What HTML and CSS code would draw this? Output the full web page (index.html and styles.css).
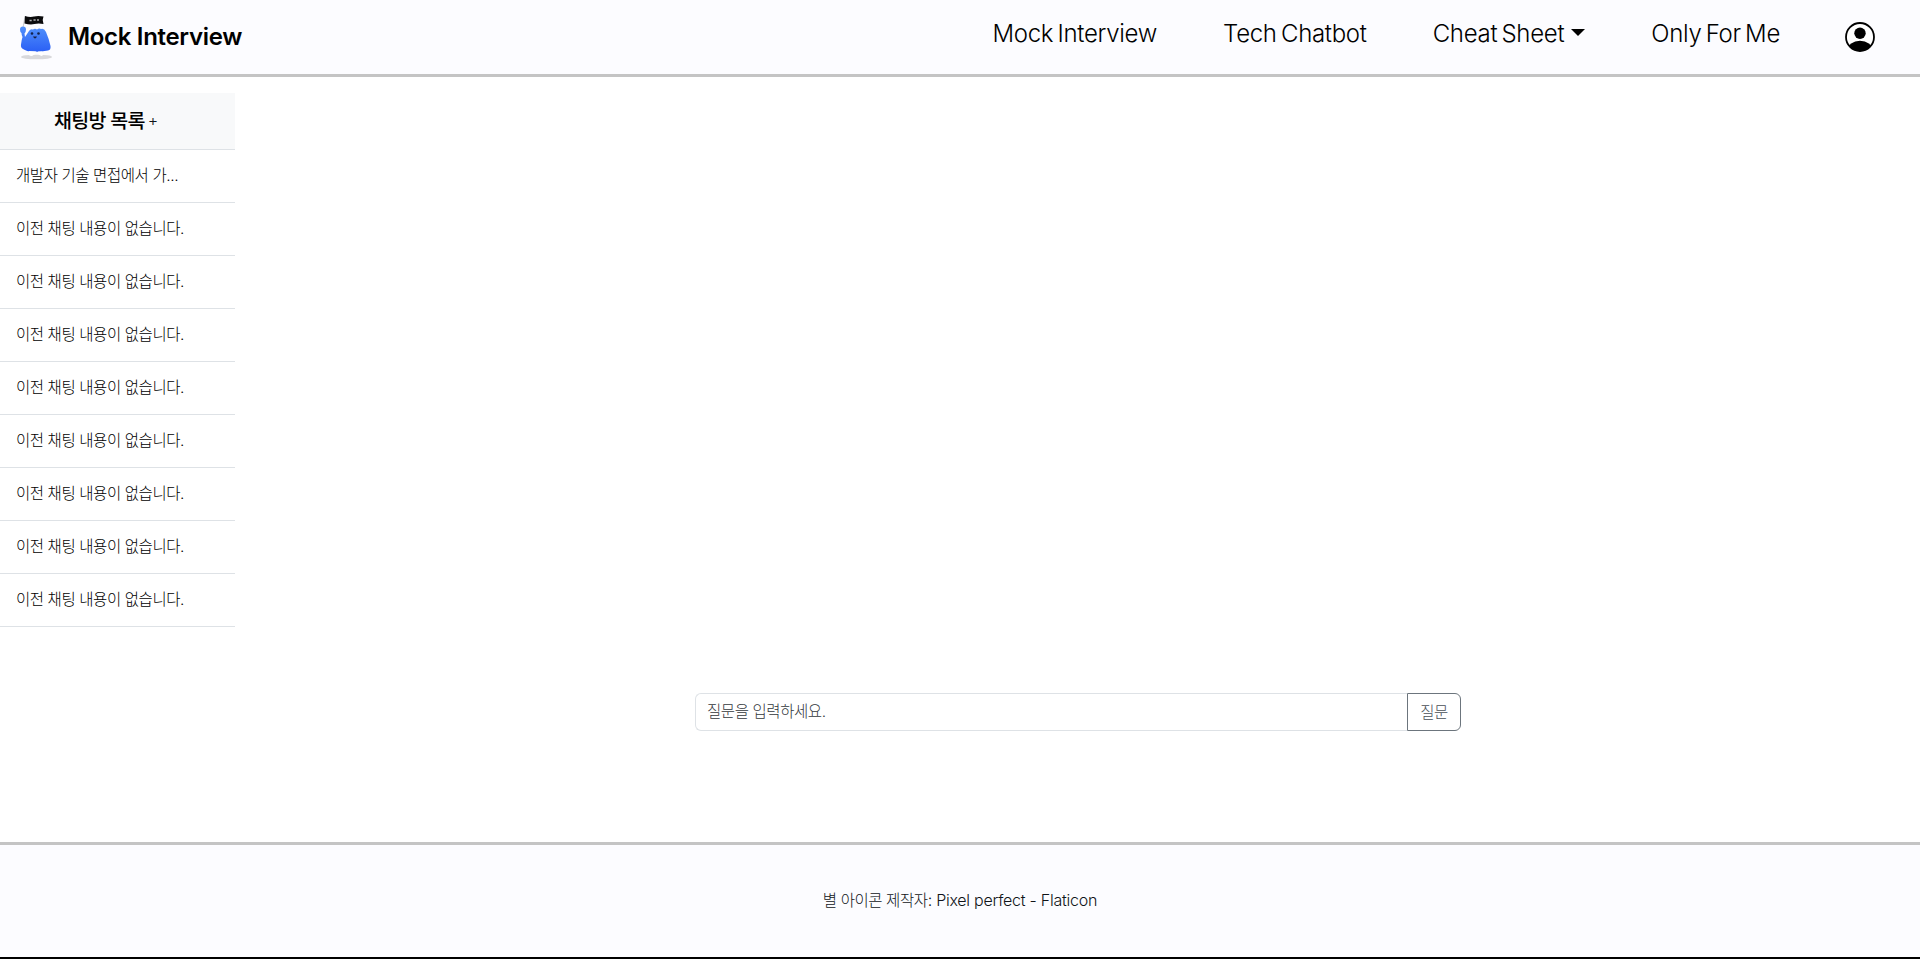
FILE: index.html
```html
<!DOCTYPE html>
<html lang="ko">
<head>
<meta charset="utf-8">
<title>Mock Interview</title>
<link rel="stylesheet" href="styles.css">
</head>
<body>
<header class="navbar">
  <a class="brand">
    <svg class="brand-logo" width="36" height="48" viewBox="0 0 36 48">
      <defs>
        <linearGradient id="body" x1="0" y1="0" x2="0" y2="1"><stop offset="0" stop-color="#5090fb"/><stop offset="1" stop-color="#2b60f5"/></linearGradient>
      </defs>
      <ellipse cx="17.500" cy="44" rx="15.500" ry="2.300" fill="#d9d9dc"/>
      <path d="M4 15L6 3" stroke="#c9cbd0" stroke-width="1"/>
      <path d="M6 3q5 1.500 9 .5t9.500 0l-.8 3.500.8 4q-5-1-9 0t-10-.5z" fill="#0b0b0d"/>
      <path d="M10.500 7.500h2.200M14.500 7h2.200M18 7h2" stroke="#aaa" stroke-width="1.300"/>
      <path d="M1 16.500Q1 13.500 4 13.500T7 16.500Q7 19 5.500 20.500L6 24Q8 21 10 18Q11.500 15.500 14 16.500Q16 15 18 16.500Q20 15 22 16Q25 15 27 19Q30 26 31.500 33Q32 37 29 37.500Q22 39 16 38.500Q8 39 4 36Q1.500 34.500 2 31.500Q2.500 27 3.500 24Q2.500 22 2.500 20Q1 19 1 16.500Z" fill="url(#body)"/>
      <path d="M10 38q-2 5 3 5l3-2 1-2.500zM19 38.500q0 4 4 4.500 2-1 0-4.500z" fill="#fff"/>
      <circle cx="13" cy="20.500" r="1.300" fill="#12214c"/>
      <circle cx="19.500" cy="20.500" r="1.300" fill="#12214c"/>
      <path d="M14 23.500h4q-2 4-4 0z" fill="#172044"/>
    </svg>
    <span class="brand-name">Mock Interview</span>
  </a>
  <nav class="nav">
    <a class="nav-link">Mock Interview</a>
    <a class="nav-link">Tech Chatbot</a>
    <a class="nav-link">Cheat Sheet<span class="caret"></span></a>
    <a class="nav-link">Only For Me</a>
  </nav>
  <svg class="profile" width="30" height="30" viewBox="0 0 30 30">
    <defs><clipPath id="disc"><circle cx="15" cy="15" r="14"/></clipPath></defs>
    <circle cx="15" cy="15" r="14" fill="#fff" stroke="#000" stroke-width="1.800"/>
    <circle cx="15" cy="11.300" r="5.700"/>
    <ellipse cx="15" cy="28" rx="12.500" ry="9.200" clip-path="url(#disc)"/>
  </svg>
</header>
<main class="main">
  <aside class="rooms">
    <div class="rooms-head"><h2 class="rooms-title">채팅방 목록</h2><span class="rooms-add">+</span></div>
    <ul class="room-list">
      <li class="room">개발자 기술 면접에서 가...</li>
      <li class="room">이전 채팅 내용이 없습니다.</li>
      <li class="room">이전 채팅 내용이 없습니다.</li>
      <li class="room">이전 채팅 내용이 없습니다.</li>
      <li class="room">이전 채팅 내용이 없습니다.</li>
      <li class="room">이전 채팅 내용이 없습니다.</li>
      <li class="room">이전 채팅 내용이 없습니다.</li>
      <li class="room">이전 채팅 내용이 없습니다.</li>
      <li class="room">이전 채팅 내용이 없습니다.</li>
    </ul>
  </aside>
  <section class="chat">
    <form class="ask">
      <input class="ask-input" type="text" placeholder="질문을 입력하세요.">
      <button class="ask-button" type="button">질문</button>
    </form>
  </section>
</main>
<footer class="footer"><p class="credit"><span class="credit-ko">별 아이콘 제작자</span>: Pixel perfect - Flaticon</p></footer>
</body>
</html>
```
FILE: styles.css
```css
* { box-sizing: border-box; }
body {
  margin: 0;
  height: 959px;
  display: flex;
  flex-direction: column;
  overflow: hidden;
  background: #fff;
  color: #101418;
  font-family: Inter, "Noto Sans CJK KR", sans-serif;
  font-weight: 300;
  border-bottom: 2px solid #000;
}
.navbar {
  flex: none;
  height: 77px;
  display: flex;
  align-items: flex-start;
  padding: 0 45px 0 19px;
  background: #fcfcff;
  border-bottom: 3px solid #c4c4c4;
  color: #000;
}
.brand { display: flex; margin-top: 13px; }
.brand-logo { flex: none; }
.brand-name {
  margin-left: 13px;
  font-size: 24px;
  line-height: 48px;
  font-weight: 600;
  letter-spacing: -0.32px;
  white-space: nowrap;
}
.nav { display: flex; margin-left: auto; gap: 66px; }
.nav-link {
  font-size: 24px;
  line-height: 36px;
  margin-top: 16px;
  font-weight: 340;
  letter-spacing: -0.3px;
  word-spacing: -2.2px;
  white-space: nowrap;
}
.caret {
  display: inline-block;
  margin-left: 7px;
  vertical-align: 6px;
  border-top: 7px solid #000;
  border-left: 7px solid transparent;
  border-right: 7px solid transparent;
}
.profile { flex: none; margin: 22px 0 0 65px; }
.main { flex: 1; display: flex; padding-top: 16px; min-height: 0; }
.rooms { flex: none; width: 235px; }
.rooms-head {
  height: 57px;
  display: flex;
  align-items: center;
  padding: 0 0 0 54px;
  background: #f8f9fa;
  border-bottom: 1px solid #dee2e6;
}
.rooms-title {
  margin: 0;
  font-size: 19.5px;
  line-height: 28px;
  font-weight: 500;
  letter-spacing: -0.7px;
  color: #000;
}
.rooms-add { margin-left: 3px; font-size: 16px; line-height: 26px; padding-bottom: 2px; }
.room-list { list-style: none; margin: 0; padding: 0; }
.room {
  height: 53px;
  padding-left: 16px;
  font-size: 15.5px;
  letter-spacing: -0.42px;
  line-height: 52px;
  border-bottom: 1px solid #dee2e6;
  color: #000;
  white-space: nowrap;
}
.chat { flex: 1; display: flex; align-items: flex-end; padding: 0 0 111px 460px; }
.ask { display: flex; width: 766px; height: 38px; }
.ask-input {
  flex: 1;
  min-width: 0;
  padding: 0 11px 2px;
  border: 1px solid #dee2e6;
  border-right: 0;
  border-radius: 6px 0 0 6px;
  background: #fff;
  font: inherit;
  font-size: 15.5px;
  letter-spacing: -0.42px;
}
.ask-input::placeholder { color: #33383c; opacity: 1; }
.ask-button {
  width: 54px;
  padding: 0 0 2px;
  border: 1px solid #6c757d;
  border-radius: 0 6px 6px 0;
  background: #fff;
  color: #495057;
  font: inherit;
  font-size: 15.5px;
  letter-spacing: -0.42px;
}
.footer {
  flex: none;
  height: 115px;
  border-top: 3px solid #c4c4c4;
  background: #fcfcff;
  display: flex;
  justify-content: center;
  align-items: center;
}
.credit {
  margin: 0;
  padding-bottom: 2px;
  font-size: 16px;
  line-height: 24px;
  letter-spacing: -0.25px;
  white-space: nowrap;
}
.credit-ko { font-size: 15.5px; letter-spacing: -0.42px; }
```
